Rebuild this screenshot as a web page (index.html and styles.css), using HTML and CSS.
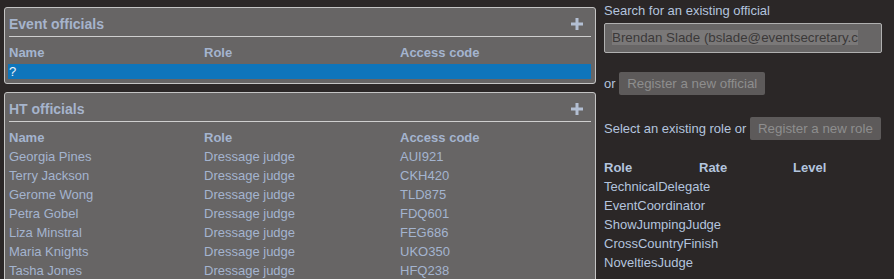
FILE: index.html
```html
<!DOCTYPE html>
<html lang="en">
<head>
  <meta charset="UTF-8" />
  <title>Officials</title>
  <link rel="stylesheet" href="styles.css">
</head>
<body>
  <div class="page">

    <!-- OFFICIALS LISTS -->
    <div class="officials">
      <section class="panel">
        <div class="panel-head">
          <h2>Event officials</h2>
          <svg class="add" width="12" height="12" viewBox="0 0 12 12"><path d="M6 0v12M0 6h12" stroke="currentColor" stroke-width="3"/></svg>
        </div>
        <div class="row head"><span>Name</span><span>Role</span><span>Access code</span></div>
        <div class="row selected"><span>?</span><span></span><span></span></div>
      </section>

      <section class="panel">
        <div class="panel-head">
          <h2>HT officials</h2>
          <svg class="add" width="12" height="12" viewBox="0 0 12 12"><path d="M6 0v12M0 6h12" stroke="currentColor" stroke-width="3"/></svg>
        </div>
        <div class="row head"><span>Name</span><span>Role</span><span>Access code</span></div>
        <div class="row"><span>Georgia Pines</span><span>Dressage judge</span><span>AUI921</span></div>
        <div class="row"><span>Terry Jackson</span><span>Dressage judge</span><span>CKH420</span></div>
        <div class="row"><span>Gerome Wong</span><span>Dressage judge</span><span>TLD875</span></div>
        <div class="row"><span>Petra Gobel</span><span>Dressage judge</span><span>FDQ601</span></div>
        <div class="row"><span>Liza Minstral</span><span>Dressage judge</span><span>FEG686</span></div>
        <div class="row"><span>Maria Knights</span><span>Dressage judge</span><span>UKO350</span></div>
        <div class="row"><span>Tasha Jones</span><span>Dressage judge</span><span>HFQ238</span></div>
      </section>
    </div>

    <!-- PICKER -->
    <aside class="picker">
      <label class="search-label">Search for an existing official</label>
      <div class="search"><span class="sel">Brendan Slade (bslade@eventsecretary.c</span></div>

      <p class="line or">or <button class="btn">Register a new official</button></p>
      <p class="line role-line">Select an existing role or <button class="btn">Register a new role</button></p>

      <div class="roles">
        <div class="role-row head"><span>Role</span><span>Rate</span><span>Level</span></div>
        <div class="role-row"><span>TechnicalDelegate</span><span></span><span></span></div>
        <div class="role-row"><span>EventCoordinator</span><span></span><span></span></div>
        <div class="role-row"><span>ShowJumpingJudge</span><span></span><span></span></div>
        <div class="role-row"><span>CrossCountryFinish</span><span></span><span></span></div>
        <div class="role-row"><span>NoveltiesJudge</span><span></span><span></span></div>
      </div>
    </aside>

  </div>
</body>
</html>
```

FILE: styles.css
```css
body {
  margin: 0;
  background: #2b2727;
  font-family: "Liberation Sans", Arial, sans-serif;
  font-size: 13px;
  color: #a4b4cf;
  overflow: hidden;
}

.page {
  display: flex;
  padding-left: 4px;
}

/* OFFICIALS */
.officials {
  width: 592px;
  margin-top: 7px;
}

.panel {
  background: #676565;
  border: 1px solid #c4c4c4;
  border-radius: 3px;
  padding: 0 4px 2px;
  margin-bottom: 8px;
}

.panel-head {
  display: flex;
  justify-content: space-between;
  align-items: center;
  box-sizing: border-box;
  height: 29px;
  padding-top: 4px;
  border-bottom: 1px solid #cfcfcf;
  margin-bottom: 6px;
}

.panel-head h2 {
  margin: 0;
  font-size: 14px;
  font-weight: bold;
  color: #a6b4cc;
}

.add {
  color: #b3bfd3;
  margin-right: 8px;
}

.row {
  display: grid;
  grid-template-columns: 195px 196px 1fr;
  height: 19px;
  line-height: 19px;
  white-space: nowrap;
}

.row.head {
  font-weight: bold;
}

.row.selected {
  height: 15px;
  line-height: 15px;
  margin: 2px 0 2px -1px;
  padding-left: 1px;
  background: #0e75bb;
  color: #eef3fa;
}

/* PICKER */
.picker {
  width: 278px;
  margin-left: 8px;
  padding-top: 3px;
  color: #b3c4de;
}

.search-label {
  display: block;
  line-height: 15px;
}

.search {
  box-sizing: border-box;
  height: 30px;
  margin-top: 5px;
  padding: 5px 7px;
  background: #686666;
  border: 1px solid #b0b0b0;
  border-radius: 2px;
  font-size: 13.33px;
  line-height: 17px;
  white-space: nowrap;
  overflow: hidden;
}

.sel {
  background: #7a7878;
  color: #3b3838;
}

.line {
  margin: 0;
  height: 23px;
  line-height: 23px;
  white-space: nowrap;
}

.or {
  margin-top: 19px;
}

.role-line {
  margin-top: 22px;
}

.btn {
  height: 23px;
  padding: 0 8px;
  border: 0;
  border-radius: 2px;
  background: #5d5a5a;
  color: #8e8e8e;
  font-family: "Liberation Sans", Arial, sans-serif;
  font-size: 13.33px;
  vertical-align: top;
}

.roles {
  margin-top: 18px;
}

.role-row {
  display: grid;
  grid-template-columns: 95px 94px 1fr;
  height: 19px;
  line-height: 19px;
}

.role-row.head {
  font-weight: bold;
}
```
